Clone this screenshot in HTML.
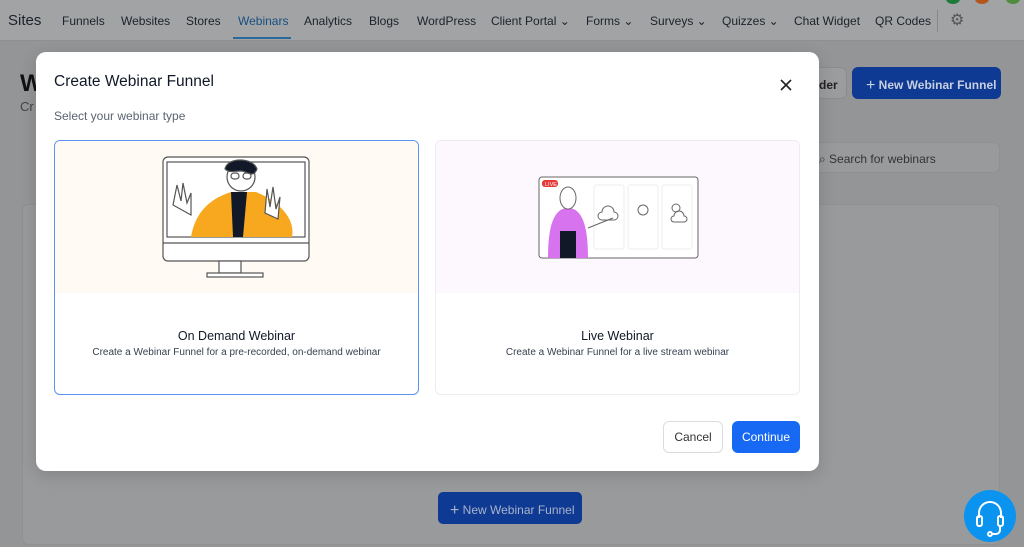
<!DOCTYPE html>
<html><head><meta charset="utf-8"><style>
*{box-sizing:border-box;margin:0;padding:0}
body{width:1024px;height:545px;overflow:hidden;position:relative;background:#939597;font-family:"Liberation Sans",sans-serif}
.nav{position:absolute;left:0;top:0;width:1024px;height:41px;background:#a2a3a4;border-bottom:1px solid #8d8f92}
.nav span{position:absolute;top:14px;font-size:12px;color:#1c222b}
.dots{position:absolute;top:-6px;width:14px;height:10px;border-radius:50%}
.card{position:absolute;left:22px;top:204px;width:978px;height:341px;background:#999a9c;border-radius:6px;border:1px solid #8e9092}
.modal{position:absolute;left:36px;top:52px;width:783px;height:419px;background:#fff;border-radius:10px;box-shadow:0 4px 16px rgba(0,0,0,.15)}
.opt{position:absolute;top:88px;width:365px;height:255px;border-radius:6px;overflow:hidden;background:#fff}
.opt .t{position:absolute;width:100%;text-align:center;font-size:12px}
</style></head><body>
<div class="nav">
<span style="left:8px;top:12px;font-size:15px">Sites</span>
<span style="left:62px">Funnels</span><span style="left:121px">Websites</span><span style="left:186px">Stores</span>
<span style="left:238px;color:#174f83">Webinars</span>
<div style="position:absolute;left:233px;top:37px;width:58px;height:2px;background:#2b6a98"></div>
<span style="left:304px">Analytics</span><span style="left:369px">Blogs</span><span style="left:417px">WordPress</span>
<span style="left:491px">Client Portal ⌄</span><span style="left:586px">Forms ⌄</span><span style="left:650px">Surveys ⌄</span>
<span style="left:722px">Quizzes ⌄</span><span style="left:794px">Chat Widget</span><span style="left:875px">QR Codes</span>
<div style="position:absolute;left:937px;top:10px;width:1px;height:22px;background:#888"></div>
<span style="left:950px;top:10px;font-size:16px;color:#555">⚙</span>
<div class="dots" style="left:946px;background:#1e7a3a"></div><div class="dots" style="left:975px;background:#b2561c"></div><div class="dots" style="left:1006px;background:#4f8d3d"></div>
</div>
<div style="position:absolute;left:20px;top:70px;font-size:24px;font-weight:bold;color:#111">W</div>
<div style="position:absolute;left:20px;top:99px;font-size:13px;color:#444">Cr</div>
<div style="position:absolute;left:800px;top:67px;width:47px;height:32px;border-radius:6px;background:#9b9c9e;border:1px solid #8a8c8e;font-size:12px;font-weight:bold;color:#222;padding:10px 0 0 18px">der</div>
<div style="position:absolute;left:852px;top:67px;width:149px;height:32px;border-radius:6px;background:#0e3a94;color:#c8cfe0;font-size:12px;font-weight:bold;padding:9px 0 0 14px"><span style="font-size:16px;font-weight:normal;position:relative;top:1px">+</span> New Webinar Funnel</div>
<div style="position:absolute;left:800px;top:142px;width:200px;height:31px;border-radius:6px;background:#999a9c;border:1px solid #8e9092;font-size:12px;color:#333;padding:9px 0 0 18px">⌕ Search for webinars</div>
<div class="card"></div>
<div style="position:absolute;left:438px;top:492px;width:144px;height:32px;border-radius:5px;background:#0e3a94;color:#a9b3c9;font-size:12px;padding:9px 0 0 12px"><span style="font-size:16px;position:relative;top:1px">+</span> New Webinar Funnel</div>
<div style="position:absolute;left:964px;top:490px;width:52px;height:52px;border-radius:50%;background:#0a93ef">
<svg width="52" height="52" viewBox="0 0 52 52" fill="none" stroke="#fff" stroke-width="2"><path d="M15 28v-5a11 11 0 0 1 22 0v5"/><rect x="13" y="26" width="5" height="10" rx="2"/><rect x="34" y="26" width="5" height="10" rx="2"/><path d="M36 36v4a4 4 0 0 1-4 4h-4"/><circle cx="26" cy="44" r="2"/></svg></div>

<div class="modal">
<div style="position:absolute;left:18px;top:21px;font-size:15.5px;color:#111827">Create Webinar Funnel</div>
<svg style="position:absolute;left:744px;top:27px" width="12" height="12" viewBox="0 0 12 12" stroke="#222" stroke-width="1.6"><path d="M1 1l10 10M11 1L1 11"/></svg>
<div style="position:absolute;left:18px;top:57px;font-size:12px;color:#5b6472">Select your webinar type</div>
<div class="opt" style="left:18px;border:1.5px solid #5b93f1">
<div style="position:absolute;left:0;top:0;width:100%;height:152px;background:#fffbf4"></div>
<svg style="position:absolute;left:106px;top:14px" width="150" height="124" viewBox="0 0 150 124" fill="none" stroke="#555" stroke-width="1.2">
<rect x="2" y="2" width="146" height="104" rx="5" fill="#fff"/><rect x="6" y="7" width="138" height="75" fill="#fff"/>
<path d="M2 88h146" /><rect x="58" y="106" width="22" height="12" fill="#fff"/><rect x="46" y="118" width="56" height="4" fill="#fff"/>
<path d="M30 82c5-30 25-40 40-45h25c20 8 40 25 36 45z" fill="#f8a81e" stroke="none"/>
<path d="M70 37h16l-4 45h-10z" fill="#111827" stroke="none"/>
<ellipse cx="80" cy="22" rx="14" ry="14" fill="#fff"/><path d="M64 14c2-12 28-12 32 0 -4 10-10 2-16 2-8 0-12 2-16-2z" fill="#111827"/>
<rect x="70" y="18" width="8" height="6" rx="3"/><rect x="82" y="18" width="8" height="6" rx="3"/>
<path d="M12 50l4-20 4 16 2-18 4 20 4-10 0 22z" fill="#fff"/><path d="M104 58l2-24 3 18 3-20 3 22 4-12-2 22z" fill="#fff"/>
</svg>
<div class="t" style="top:188px;color:#111827;font-size:12.5px">On Demand Webinar</div>
<div class="t" style="top:206px;color:#374151;font-size:10px">Create a Webinar Funnel for a pre-recorded, on-demand webinar</div>
</div>
<div class="opt" style="left:399px;border:1px solid #ececf2">
<div style="position:absolute;left:0;top:0;width:100%;height:152px;background:#fdf8fe"></div>
<svg style="position:absolute;left:102px;top:35px" width="162" height="84" viewBox="0 0 162 84" fill="none" stroke="#666" stroke-width="1">
<rect x="1" y="1" width="159" height="81" rx="3" fill="#fff"/>
<rect x="4" y="4" width="16" height="7" rx="3" fill="#e53935" stroke="none"/><text x="7" y="10" font-size="5.5" fill="#fff" stroke="none" font-family="Liberation Sans">LIVE</text>
<rect x="56" y="9" width="30" height="64" rx="2" stroke="#eee"/><rect x="90" y="9" width="30" height="64" rx="2" stroke="#eee"/><rect x="124" y="9" width="30" height="64" rx="2" stroke="#eee"/>
<path d="M64 36a6 6 0 0 1 12 0 4 4 0 0 1 0 8h-12a4 4 0 0 1 0-8z"/><circle cx="105" cy="34" r="5"/><circle cx="138" cy="32" r="4"/><path d="M136 40a5 5 0 0 1 10 0 3 3 0 0 1 0 6h-10a3 3 0 0 1 0-6z"/>
<path d="M10 82c0-30 5-50 20-50s20 20 20 50z" fill="#d873f0" stroke="none"/><path d="M22 55h16v27h-16z" fill="#111827" stroke="none"/>
<ellipse cx="30" cy="22" rx="8" ry="11" fill="#fff"/><path d="M50 52l25-10"/>
</svg>
<div class="t" style="top:188px;color:#111827;font-size:12.5px">Live Webinar</div>
<div class="t" style="top:206px;color:#374151;font-size:10px">Create a Webinar Funnel for a live stream webinar</div>
</div>
<div style="position:absolute;left:627px;top:369px;width:60px;height:32px;border:1px solid #d9dce1;border-radius:6px;font-size:12px;color:#333;text-align:center;line-height:30px">Cancel</div>
<div style="position:absolute;left:696px;top:369px;width:68px;height:32px;border-radius:6px;background:#1769f3;font-size:12px;color:#fff;text-align:center;line-height:32px">Continue</div>
</div>
</body></html>
